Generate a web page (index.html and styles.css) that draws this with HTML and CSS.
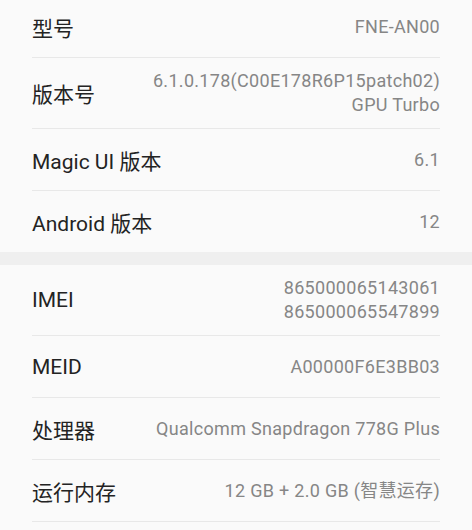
FILE: index.html
```html
<!DOCTYPE html>
<html lang="zh-CN">
<head>
<meta charset="utf-8">
<title>关于手机</title>
<link rel="stylesheet" href="styles.css">
</head>
<body>
<div class="list">
  <div class="group">
    <div class="row"><span class="label">型号</span><span class="value">FNE-AN00</span></div>
    <div class="row"><span class="label">版本号</span><span class="value"><span class="line">6.1.0.178(C00E178R6P15patch02)</span><span class="line">GPU Turbo</span></span></div>
    <div class="row"><span class="label">Magic UI 版本</span><span class="value">6.1</span></div>
    <div class="row"><span class="label">Android 版本</span><span class="value">12</span></div>
  </div>
  <div class="gap"></div>
  <div class="group">
    <div class="row"><span class="label">IMEI</span><span class="value"><span class="line">865000065143061</span><span class="line">865000065547899</span></span></div>
    <div class="row"><span class="label">MEID</span><span class="value">A00000F6E3BB03</span></div>
    <div class="row"><span class="label">处理器</span><span class="value">Qualcomm Snapdragon 778G Plus</span></div>
    <div class="row last-bordered"><span class="label">运行内存</span><span class="value">12 GB + 2.0 GB (智慧运存)</span></div>
  </div>
</div>
</body>
</html>
```
FILE: styles.css
```css
html, body {
  margin: 0;
  padding: 0;
  background: #fafafa;
  font-family: Roboto, "Noto Sans CJK SC", sans-serif;
  overflow: hidden;
}

.list {
  margin-top: -4px;
}

.group {
  padding: 0 32px;
  background: #fafafa;
}

.row {
  box-sizing: border-box;
  min-height: 62px;
  padding: 11px 0;
  display: flex;
  align-items: center;
  justify-content: space-between;
  border-bottom: 1px solid #e8e8e8;
}

.group .row:last-child {
  border-bottom: none;
  min-height: 61px;
}

.group .row.last-bordered {
  border-bottom: 1px solid #e8e8e8;
  min-height: 62px;
}

.label {
  font-size: 21px;
  color: #232323;
  white-space: nowrap;
}

.value {
  font-size: 18px;
  letter-spacing: 0.3px;
  color: #868686;
  text-align: right;
  display: flex;
  flex-direction: column;
  align-items: flex-end;
  line-height: 24px;
  white-space: nowrap;
}

.line {
  display: block;
}

.gap {
  height: 13px;
  background: #efefef;
}
```
